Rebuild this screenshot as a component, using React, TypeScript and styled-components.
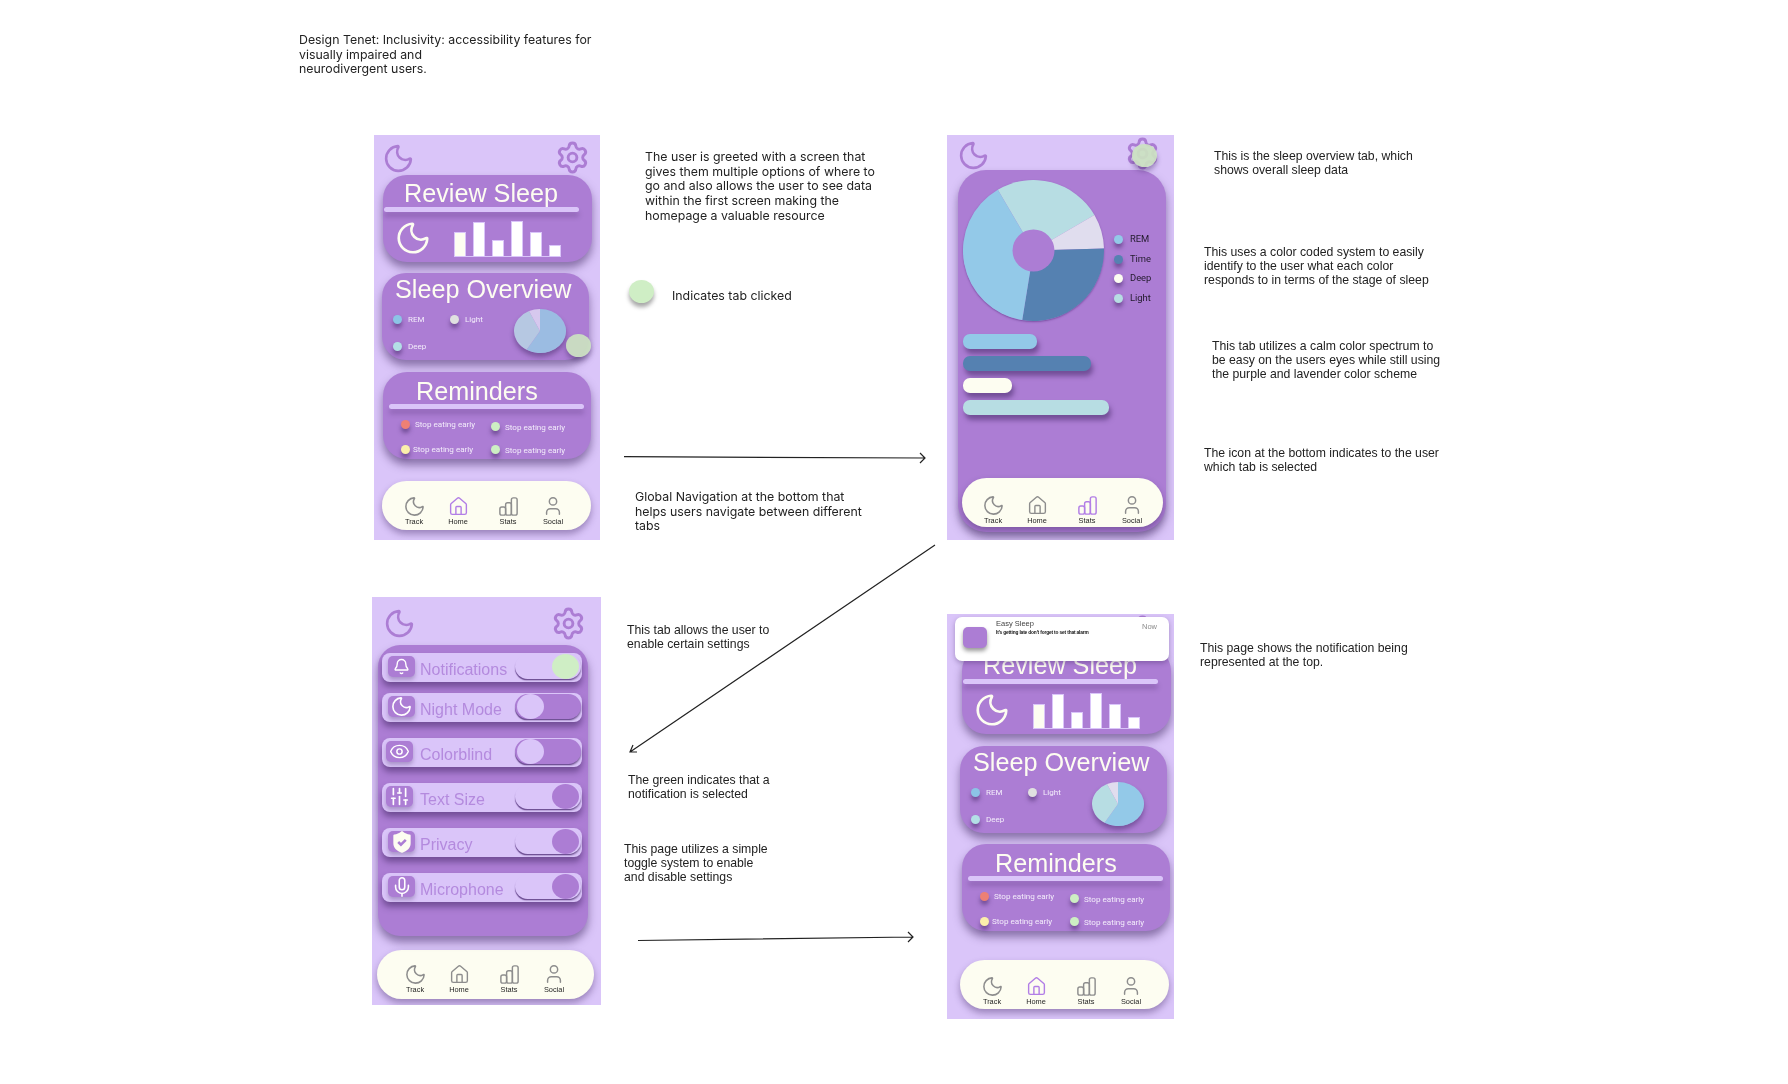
import React from 'react';
import styled, { createGlobalStyle } from 'styled-components';
import { Bell, Eye, House, Mic, Moon, Settings, SlidersVertical, User } from 'lucide-react';

const LAVENDER = '#dac5f9';
const PURPLE = '#ac7dd4';
const CREAM = '#fdfdf1';
const DEEP_SHADOW = 'rgba(58, 32, 92, 0.5)';

const GlobalStyle = createGlobalStyle`
  html, body {
    margin: 0;
    background: #fff;
  }
`;

const Canvas = styled.div`
  position: relative;
  width: 1788px;
  height: 1084px;
  overflow: hidden;
  background: #fff;
`;

const Note = styled.p<{ $x: number; $y: number; $inter?: boolean; $lh?: number }>`
  position: absolute;
  left: ${p => p.$x}px;
  top: ${p => p.$y}px;
  margin: 0;
  white-space: pre-line;
  font-family: ${p => (p.$inter ? 'Inter' : '"Liberation Sans"')}, sans-serif;
  font-size: ${p => (p.$inter ? 12.35 : 12.25)}px;
  line-height: ${p => p.$lh ?? 14}px;
  color: #222;
  filter: blur(0.4px);
`;

const ClickDot = styled.div`
  position: absolute;
  left: 629px;
  top: 280px;
  width: 25px;
  height: 23px;
  border-radius: 50%;
  background: #cfeec5;
  box-shadow: 0 4px 4px rgba(0, 0, 0, 0.35);
`;

const ArrowLayer = styled.svg`
  position: absolute;
  inset: 0;
  pointer-events: none;
`;

const Phone = styled.div<{ $x: number; $y: number; $w: number; $h: number }>`
  position: absolute;
  left: ${p => p.$x}px;
  top: ${p => p.$y}px;
  width: ${p => p.$w}px;
  height: ${p => p.$h}px;
  display: flex;
  flex-direction: column;
  overflow: hidden;
  background: ${LAVENDER};
  font-family: 'Liberation Sans', sans-serif;
  filter: blur(0.4px);
`;

const Header = styled.div<{ $h: number; $pad: string }>`
  flex: none;
  height: ${p => p.$h}px;
  box-sizing: border-box;
  padding: ${p => p.$pad};
  display: flex;
  justify-content: space-between;
  align-items: flex-start;
  color: ${PURPLE};
`;

const HeaderMoon = styled(Moon)<{ $drop: number }>`
  margin-top: ${p => p.$drop}px;
`;

const Card = styled.section<{ $w: number; $h: number; $ml: number; $mt?: number }>`
  position: relative;
  flex: none;
  box-sizing: border-box;
  width: ${p => p.$w}px;
  height: ${p => p.$h}px;
  margin: ${p => p.$mt ?? 0}px 0 0 ${p => p.$ml}px;
  border-radius: 24px;
  background: ${PURPLE};
  box-shadow: 0 6px 9px ${DEEP_SHADOW};
`;

const CardTitle = styled.h2<{ $left: number; $drop?: number }>`
  margin: 0;
  height: 32px;
  padding: ${p => p.$drop ?? 0}px 0 0 ${p => p.$left}px;
  box-sizing: border-box;
  font-size: 25.2px;
  font-weight: 400;
  line-height: 32px;
  color: ${CREAM};
  white-space: nowrap;
`;

const Divider = styled.div<{ $left: number }>`
  width: 195px;
  height: 5px;
  margin-left: ${p => p.$left}px;
  border-radius: 3px;
  background: ${LAVENDER};
  box-shadow: 0 5px 5px rgba(58, 32, 92, 0.25);
`;

const ReviewBody = styled.div`
  display: flex;
  align-items: flex-start;
  padding: 7px 0 0 11px;
  color: ${CREAM};
`;

const BarChart = styled.div`
  display: flex;
  align-items: flex-end;
  gap: 7px;
  height: 36px;
  margin: 1px 0 0 22px;
  border-bottom: 1px solid ${LAVENDER};
`;

const SleepBar = styled.div<{ $h: number; $first?: boolean }>`
  width: 12px;
  height: ${p => p.$h}px;
  box-sizing: border-box;
  background: ${p => (p.$first ? CREAM : '#fff')};
  border: 1px solid ${LAVENDER};
  border-bottom: 0;
`;

const OverviewBody = styled.div`
  display: flex;
  padding-left: 11px;
`;

const OverviewLegend = styled.div`
  display: grid;
  grid-template-columns: 57px auto;
  grid-auto-rows: 9px;
  row-gap: 18px;
  margin-top: 10px;
`;

const LegendItem = styled.div`
  display: flex;
  align-items: center;
  gap: 6px;
  font-family: Roboto, sans-serif;
  font-size: 8px;
  color: #f3ecfb;
  white-space: nowrap;
`;

const Dot = styled.span<{ $color: string; $size?: number }>`
  flex: none;
  display: block;
  width: ${p => p.$size ?? 9}px;
  height: ${p => p.$size ?? 9}px;
  border-radius: 50%;
  background: ${p => p.$color};
  box-shadow: 0 4px 4px ${DEEP_SHADOW};
`;

const PieHolder = styled.div`
  width: 52px;
  height: 44px;
  margin: 4px 0 0 auto;
  margin-right: 23px;
  border-radius: 50%;
  box-shadow: 0 4px 5px rgba(58, 32, 92, 0.45);
`;

const Press = styled.div<{ $x: number; $y: number }>`
  position: absolute;
  left: ${p => p.$x}px;
  top: ${p => p.$y}px;
  width: 25px;
  height: 23px;
  border-radius: 50%;
  background: rgba(203, 226, 192, 0.92);
  box-shadow: 0 4px 5px rgba(58, 32, 92, 0.4);
`;

const ReminderGrid = styled.div`
  display: grid;
  grid-template-columns: 90px 90px;
  grid-auto-rows: 25px;
  padding: 11px 0 0 18px;
`;

const Reminder = styled.div<{ $drop: number; $gap: number; $textDrop: number }>`
  display: flex;
  align-items: flex-start;
  gap: ${p => p.$gap}px;
  padding-top: ${p => p.$drop}px;
  font-family: Roboto, sans-serif;
  font-size: 8.1px;
  line-height: 9px;
  color: #f3ecfb;
  white-space: nowrap;

  span + span {
    margin-top: ${p => p.$textDrop}px;
  }
`;

const NavBar = styled.nav<{ $w: number; $ml: number; $pad: number; $mb: number; $top: number }>`
  flex: none;
  display: grid;
  grid-template-columns: 44px 44px 56px 34px;
  justify-items: center;
  box-sizing: border-box;
  width: ${p => p.$w}px;
  height: 49px;
  margin: auto 0 ${p => p.$mb}px ${p => p.$ml}px;
  padding: ${p => p.$top}px 0 0 ${p => p.$pad}px;
  border-radius: 25px;
  background: ${CREAM};
  box-shadow: 0 4px 7px rgba(58, 32, 92, 0.4);
`;

const NavItem = styled.div<{ $active: boolean }>`
  display: flex;
  flex-direction: column;
  align-items: center;
  height: 36px;
  color: ${p => (p.$active ? '#b27ee6' : '#8d8d8d')};
`;

const NavIconSlot = styled.div`
  display: flex;
  align-items: center;
  justify-content: center;
  height: 22px;
`;

const NavLabel = styled.span`
  margin-top: 1px;
  font-size: 7.4px;
  line-height: 8px;
  color: #1f1f1f;
`;

const OverviewPanel = styled(Card)`
  display: flex;
  flex-direction: column;
  border-radius: 28px;
`;

const DonutRow = styled.div`
  display: flex;
  padding: 10px 0 0 5px;
`;

const DonutHolder = styled.div`
  width: 141px;
  height: 141px;
  border-radius: 50%;
  box-shadow: 0 1px 2px rgba(90, 50, 130, 0.6);
`;

const DonutLegend = styled.div`
  display: flex;
  flex-direction: column;
  gap: 10.5px;
  margin: 55px 0 0 10px;
`;

const DonutLegendItem = styled.div`
  display: flex;
  align-items: center;
  gap: 7px;
  height: 9px;
  font-family: Roboto, sans-serif;
  font-size: 9.4px;
  color: #221a2c;
  white-space: nowrap;

  span + span {
    margin-top: -2px;
  }
`;

const StageBars = styled.div`
  display: flex;
  flex-direction: column;
  gap: 7px;
  margin: 13px 0 0 5px;
`;

const StageBar = styled.div<{ $w: number; $color: string }>`
  width: ${p => p.$w}px;
  height: 15px;
  border-radius: 7px;
  background: ${p => p.$color};
  box-shadow: 2px 5px 5px ${DEEP_SHADOW};
`;

const SettingsPanel = styled(Card)`
  border-radius: 22px;
  padding: 8px 0 0 4px;
`;

const SettingRow = styled.div<{ $mt: number }>`
  display: flex;
  align-items: center;
  width: 200px;
  height: 29px;
  margin-top: ${p => p.$mt}px;
  border-radius: 8px;
  background: ${LAVENDER};
  box-shadow: 0 5px 6px ${DEEP_SHADOW};
`;

const IconTile = styled.div<{ $ml: number }>`
  flex: none;
  display: flex;
  align-items: center;
  justify-content: center;
  width: 27px;
  height: 21px;
  margin: -2px 0 0 ${p => p.$ml}px;
  border-radius: 5px;
  background: ${PURPLE};
  color: #fff;
  box-shadow: 0 3px 4px rgba(58, 32, 92, 0.3);
`;

const SettingLabel = styled.span<{ $ml: number }>`
  margin: 5px 0 0 ${p => p.$ml}px;
  font-size: 16px;
  color: #b48ade;
  white-space: nowrap;
`;

const Toggle = styled.div<{ $on: boolean }>`
  display: flex;
  align-items: center;
  justify-content: ${p => (p.$on ? 'flex-end' : 'flex-start')};
  flex: none;
  width: 66px;
  height: 25px;
  margin: -2px 1px 0 auto;
  padding: 0 2px;
  box-sizing: border-box;
  border-radius: 13px;
  background: ${p => (p.$on ? LAVENDER : PURPLE)};
  box-shadow: -1px 2px 1px -1px #6d4e93, 1px 2px 2px -1px rgba(58, 32, 92, 0.6);
`;

const Knob = styled.div<{ $color: string }>`
  width: 27px;
  height: 25px;
  border-radius: 50%;
  background: ${p => p.$color};
`;

const Notification = styled.div`
  position: absolute;
  left: 8px;
  top: 3px;
  display: flex;
  box-sizing: border-box;
  width: 214px;
  height: 44px;
  padding: 10px 12px 0 8px;
  border-radius: 7px;
  background: #fff;
  box-shadow: 0 2px 5px rgba(58, 32, 92, 0.35);
`;

const NotificationIcon = styled.div`
  flex: none;
  width: 24px;
  height: 21px;
  border-radius: 5px;
  background: ${PURPLE};
  box-shadow: 0 3px 4px rgba(0, 0, 0, 0.4);
`;

const NotificationText = styled.div`
  flex: 1;
  margin: -8px 0 0 9px;
`;

const NotificationTitle = styled.div`
  font-size: 7.5px;
  line-height: 10px;
  color: #444;
`;

const NotificationBody = styled.div`
  font-size: 4.8px;
  font-weight: 700;
  letter-spacing: -0.15px;
  line-height: 8px;
  color: #111;
  white-space: nowrap;
`;

const NotificationTime = styled.div`
  margin-top: -5px;
  font-size: 7.5px;
  color: #8b8b8b;
`;

const polar = (r: number, deg: number, c = 50) => {
  const a = (deg * Math.PI) / 180;
  return `${c + r * Math.sin(a)} ${c - r * Math.cos(a)}`;
};

const slicePath = (from: number, to: number, r = 50, c = 50) =>
  `M${c} ${c} L${polar(r, from, c)} A${r} ${r} 0 ${to - from > 180 ? 1 : 0} 1 ${polar(r, to, c)} Z`;

const MiniPie = ({ colors }: { colors: string[] }) => (
  <PieHolder>
    <svg width="52" height="44" viewBox="0 0 100 100" preserveAspectRatio="none">
      <path d={slicePath(0, 211)} fill={colors[0]} />
      <path d={slicePath(211, 335)} fill={colors[1]} />
      <path d={slicePath(335, 360)} fill={colors[2]} />
    </svg>
  </PieHolder>
);

const Donut = () => (
  <DonutHolder>
    <svg width="141" height="141" viewBox="0 0 141 141">
      <path d={slicePath(-30.4, 59.8, 70.5, 70.5)} fill="#b7dde3" />
      <path d={slicePath(59.8, 88.4, 70.5, 70.5)} fill="#e0ddee" />
      <path d={slicePath(88.4, 189.2, 70.5, 70.5)} fill="#5581b1" />
      <path d={slicePath(189.2, 329.6, 70.5, 70.5)} fill="#93c9e8" />
      <circle cx="70.5" cy="70.5" r="21" fill={PURPLE} />
    </svg>
  </DonutHolder>
);

const StatsIcon = () => (
  <svg width="23" height="23" viewBox="0 0 24 24" fill="none" stroke="currentColor" strokeWidth="1.5">
    <rect x="3" y="12.5" width="6" height="8.5" rx="2" />
    <rect x="9" y="8" width="6" height="13" rx="2" />
    <rect x="15" y="3" width="6" height="18" rx="2" />
  </svg>
);

const ShieldIcon = () => (
  <svg width="26" height="26" viewBox="0 0 24 24">
    <path
      d="M20 13c0 5-3.5 7.5-7.66 8.95a1 1 0 0 1-.67-.01C7.5 20.5 4 18 4 13V6a1 1 0 0 1 1-1c2 0 4.5-1.2 6.24-2.72a1.17 1.17 0 0 1 1.52 0C14.51 3.81 17 5 19 5a1 1 0 0 1 1 1z"
      fill={CREAM}
    />
    <path d="m8.5 12 2.5 2.5 4.5-4.5" fill="none" stroke={PURPLE} strokeWidth="2.4" />
  </svg>
);

const navTabs = [
  { label: 'Track', icon: <Moon size={23} strokeWidth={1.6} /> },
  { label: 'Home', icon: <House size={21} strokeWidth={1.6} /> },
  { label: 'Stats', icon: <StatsIcon /> },
  { label: 'Social', icon: <User size={22} strokeWidth={1.6} /> }
];

type NavProps = { active: string; w: number; ml: number; pad: number; mb: number; top?: number };

const BottomNav = ({ active, w, ml, pad, mb, top = 13 }: NavProps) => (
  <NavBar $w={w} $ml={ml} $pad={pad} $mb={mb} $top={top}>
    {navTabs.map(tab => (
      <NavItem key={tab.label} $active={tab.label === active}>
        <NavIconSlot>{tab.icon}</NavIconSlot>
        <NavLabel>{tab.label}</NavLabel>
      </NavItem>
    ))}
  </NavBar>
);

const TopBar = ({ h, pad, moonDrop = 0 }: { h: number; pad: string; moonDrop?: number }) => (
  <Header $h={h} $pad={pad}>
    <HeaderMoon size={33} strokeWidth={1.9} $drop={moonDrop} />
    <Settings size={35} strokeWidth={2} />
  </Header>
);

const sleepBars = [24, 34, 16, 35, 24, 11];

const reminders = [
  { color: '#ee8074', drop: 0, gap: 5, textDrop: 0 },
  { color: '#cdeec3', drop: 2, gap: 5, textDrop: 1 },
  { color: '#fbeeab', drop: 0, gap: 3, textDrop: 0 },
  { color: '#cdeec3', drop: 0, gap: 5, textDrop: 1 }
];

type HomeProps = {
  left: number;
  overviewLeft: number;
  navLeft: number;
  navTop: number;
  headerH: number;
  headerPad: string;
  overviewGap: number;
  remindersGap: number;
  pie: string[];
  pressed?: boolean;
  children?: React.ReactNode;
};

const HomeScreen = ({ left, overviewLeft, navLeft, navTop, headerH, headerPad, overviewGap, remindersGap, pie, pressed, children }: HomeProps) => (
  <>
    <TopBar h={headerH} pad={headerPad} moonDrop={2} />
    <Card $w={209} $h={87} $ml={left}>
      <CardTitle $left={21} $drop={2}>Review Sleep</CardTitle>
      <Divider $left={1} />
      <ReviewBody>
        <Moon size={38} strokeWidth={1.7} />
        <BarChart>
          {sleepBars.map((h, i) => (
            <SleepBar key={i} $h={h} $first={i === 0} />
          ))}
        </BarChart>
      </ReviewBody>
    </Card>
    <Card $w={207} $h={87} $ml={overviewLeft} $mt={overviewGap}>
      <CardTitle $left={13}>Sleep Overview</CardTitle>
      <OverviewBody>
        <OverviewLegend>
          <LegendItem><Dot $color="#8cc4e6" />REM</LegendItem>
          <LegendItem><Dot $color="#e0e0e0" />Light</LegendItem>
          <LegendItem><Dot $color="#b3dfe6" />Deep</LegendItem>
        </OverviewLegend>
        <MiniPie colors={pie} />
      </OverviewBody>
      {pressed && <Press $x={184} $y={61} />}
    </Card>
    <Card $w={208} $h={87} $ml={left} $mt={remindersGap}>
      <CardTitle $left={33} $drop={3}>Reminders</CardTitle>
      <Divider $left={6} />
      <ReminderGrid>
        {reminders.map((r, i) => (
          <Reminder key={i} $drop={r.drop} $gap={r.gap} $textDrop={r.textDrop}>
            <Dot $color={r.color} $size={9} />
            <span>Stop eating early</span>
          </Reminder>
        ))}
      </ReminderGrid>
    </Card>
    <BottomNav active="Home" w={209} ml={navLeft} pad={10} mb={10} top={navTop} />
    {children}
  </>
);

const stageLegend = [
  { label: 'REM', color: '#93c9e8' },
  { label: 'Time', color: '#5581b1' },
  { label: 'Deep', color: CREAM },
  { label: 'Light', color: '#b7dde3' }
];

const stageBars = [
  { w: 74, color: '#93c9e8' },
  { w: 128, color: '#5581b1' },
  { w: 49, color: CREAM },
  { w: 146, color: '#b7dde3' }
];

const OverviewScreen = () => (
  <>
    <TopBar h={35} pad="1px 14px 0 10px" moonDrop={3} />
    <OverviewPanel $w={208} $h={362} $ml={11}>
      <DonutRow>
        <Donut />
        <DonutLegend>
          {stageLegend.map(item => (
            <DonutLegendItem key={item.label}>
              <Dot $color={item.color} />
              <span>{item.label}</span>
            </DonutLegendItem>
          ))}
        </DonutLegend>
      </DonutRow>
      <StageBars>
        {stageBars.map(bar => (
          <StageBar key={bar.w} $w={bar.w} $color={bar.color} />
        ))}
      </StageBars>
      <BottomNav active="Stats" w={201} ml={4} pad={9} mb={5} top={16} />
    </OverviewPanel>
    <Press $x={185} $y={9} />
  </>
);

const settingRows = [
  { label: 'Notifications', icon: <Bell size={17} strokeWidth={2} />, mt: 0, tile: 6, gap: 5, on: true, knob: '#cfeec5' },
  { label: 'Night Mode', icon: <Moon size={23} strokeWidth={1.7} />, mt: 11, tile: 6, gap: 5, on: false, knob: LAVENDER },
  { label: 'Colorblind', icon: <Eye size={21} strokeWidth={1.7} />, mt: 16, tile: 4, gap: 7, on: false, knob: LAVENDER },
  { label: 'Text Size', icon: <SlidersVertical size={21} strokeWidth={1.9} />, mt: 16, tile: 4, gap: 7, on: true, knob: PURPLE },
  { label: 'Privacy', icon: <ShieldIcon />, mt: 16, tile: 6, gap: 5, on: true, knob: PURPLE },
  { label: 'Microphone', icon: <Mic size={22} strokeWidth={1.7} />, mt: 16, tile: 6, gap: 5, on: true, knob: PURPLE }
];

const SettingsScreen = () => (
  <>
    <TopBar h={48} pad="9px 15px 0 11px" moonDrop={1} />
    <SettingsPanel $w={210} $h={291} $ml={6}>
      {settingRows.map(row => (
        <SettingRow key={row.label} $mt={row.mt}>
          <IconTile $ml={row.tile}>{row.icon}</IconTile>
          <SettingLabel $ml={row.gap}>{row.label}</SettingLabel>
          <Toggle $on={row.on}>
            <Knob $color={row.knob} />
          </Toggle>
        </SettingRow>
      ))}
    </SettingsPanel>
    <BottomNav active="" w={217} ml={5} pad={16} mb={6} />
  </>
);

export default function App() {
  return (
    <Canvas>
      <GlobalStyle />

      <Note $x={299} $y={33} $inter $lh={14.6}>
        {'Design Tenet: Inclusivity: accessibility features for\nvisually impaired and\nneurodivergent users.'}
      </Note>

      <Phone $x={374} $y={135} $w={226} $h={405}>
        <HomeScreen
          left={9}
          overviewLeft={8}
          navLeft={8}
          navTop={14}
          headerH={40}
          headerPad="5px 10px 0 8px"
          overviewGap={11}
          remindersGap={12}
          pie={['#9bbce2', '#b6c8e2', '#d6c8ee']}
          pressed
        />
      </Phone>

      <Note $x={645} $y={150} $inter $lh={14.7}>
        {'The user is greeted with a screen that\ngives them multiple options of where to\ngo and also allows the user to see data\nwithin the first screen making the\nhomepage a valuable resource'}
      </Note>
      <ClickDot />
      <Note $x={672} $y={289} $inter>Indicates tab clicked</Note>
      <Note $x={635} $y={490} $inter $lh={14.7}>
        {'Global Navigation at the bottom that\nhelps users navigate between different\ntabs'}
      </Note>

      <Phone $x={947} $y={135} $w={227} $h={405}>
        <OverviewScreen />
      </Phone>

      <Note $x={1214} $y={149}>{'This is the sleep overview tab, which\nshows overall sleep data'}</Note>
      <Note $x={1204} $y={245}>
        {'This uses a color coded system to easily\nidentify to the user what each color\nresponds to in terms of the stage of sleep'}
      </Note>
      <Note $x={1212} $y={339}>
        {'This tab utilizes a calm color spectrum to\nbe easy on the users eyes while still using\nthe purple and lavender color scheme'}
      </Note>
      <Note $x={1204} $y={446}>{'The icon at the bottom indicates to the user\nwhich tab is selected'}</Note>

      <Phone $x={372} $y={597} $w={229} $h={408}>
        <SettingsScreen />
      </Phone>

      <Note $x={627} $y={623}>{'This tab allows the user to\nenable certain settings'}</Note>
      <Note $x={628} $y={773}>{'The green indicates that a\nnotification is selected'}</Note>
      <Note $x={624} $y={842}>{'This page utilizes a simple\ntoggle system to enable\nand disable settings'}</Note>

      <Phone $x={947} $y={614} $w={227} $h={405}>
        <HomeScreen
          left={15}
          overviewLeft={13}
          navLeft={13}
          navTop={15}
          headerH={33}
          headerPad="0 14px 0 12px"
          overviewGap={12}
          remindersGap={11}
          pie={['#93c9e8', '#b7dde3', '#e0ddee']}
        >
          <Notification>
            <NotificationIcon />
            <NotificationText>
              <NotificationTitle>Easy Sleep</NotificationTitle>
              <NotificationBody>It's getting late don't forget to set that alarm</NotificationBody>
            </NotificationText>
            <NotificationTime>Now</NotificationTime>
          </Notification>
        </HomeScreen>
      </Phone>

      <Note $x={1200} $y={641}>{'This page shows the notification being\nrepresented at the top.'}</Note>

      <ArrowLayer width="1788" height="1084" viewBox="0 0 1788 1084" fill="none" stroke="#222" strokeWidth="1.2">
        <path d="M624 456.7 L925 458 M920 453 L925 458 L920 463" />
        <path d="M935 545 L630 752 M637 752 L630 752 L633 745" />
        <path d="M638 940.5 L913 937 M908 932 L913 937 L908 942" />
      </ArrowLayer>
    </Canvas>
  );
}
